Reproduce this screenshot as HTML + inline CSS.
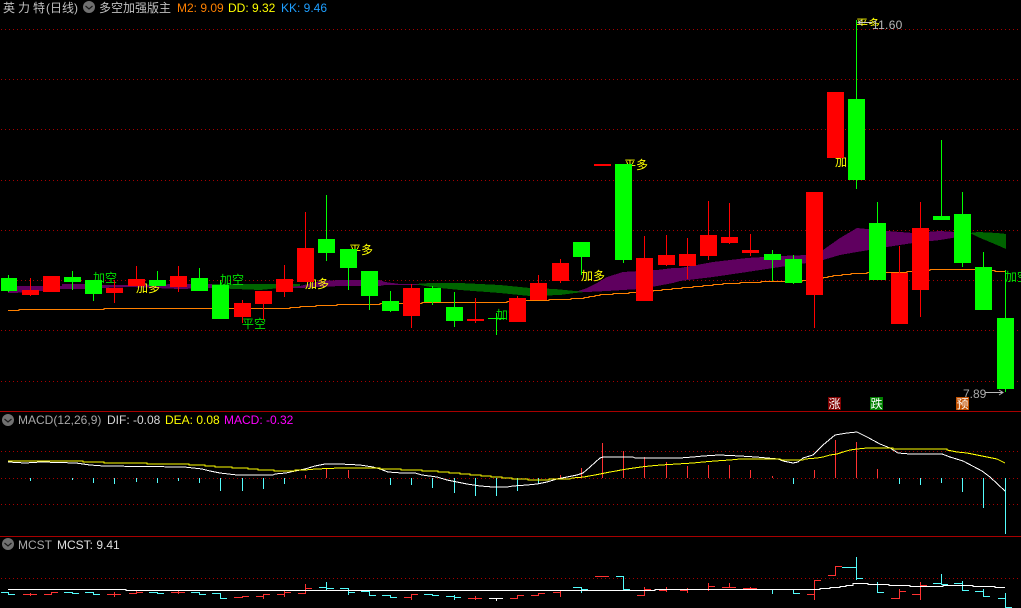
<!DOCTYPE html>
<html lang="zh"><head><meta charset="utf-8"><title>英力特</title>
<style>
html,body{margin:0;padding:0;background:#000;width:1021px;height:608px;overflow:hidden}
svg{display:block}
text{font-family:"Liberation Sans","WenQuanYi Zen Hei","Noto Sans CJK SC",sans-serif;font-size:12px}
.cn{font-family:"WenQuanYi Zen Hei","Noto Sans CJK SC",sans-serif}
.c{shape-rendering:crispEdges}
</style></head><body>
<svg width="1021" height="608" viewBox="0 0 1021 608" xmlns="http://www.w3.org/2000/svg">
<defs><clipPath id="top"><rect x="850" y="16" width="40" height="10"/></clipPath></defs>
<rect width="1021" height="608" fill="#000"/>
<g class="c" stroke="#a80000" stroke-width="1" stroke-dasharray="1 3" stroke-dashoffset="3" fill="none">
<path d="M0 29.5H1021"/><path d="M0 79.5H1021"/><path d="M0 129.5H1021"/><path d="M0 180.5H1021"/><path d="M0 230.5H1021"/><path d="M0 280.5H1021"/><path d="M0 330.5H1021"/><path d="M0 381.5H1021"/><path d="M0 451.5H1021"/><path d="M0 478.5H1021"/><path d="M0 504.5H1021"/><path d="M0 578.5H1021"/>
</g>
<path class="c" d="M0 411.5H1021M0 536.5H1021" stroke="#a80000" stroke-width="1" fill="none"/>

<!-- ribbons -->
<path class="c" fill="#5f005f" d="M8 290L16 286L62 286L62 284L85 284L102 285L130 285L180 284L212 284L300 286L320 281L340 280L380 280L385 282L400 284L420 284L420 285L400 285L385 285L380 286L340 286L320 287L300 288L212 288L180 289L130 287L102 288L85 289L62 289L40 291L30 292L14 293L8 293Z"/>
<path class="c" fill="#5f005f" d="M575 292L587 288L597 283L607 277L623 272L640 271L657 270L673 268L680 268L713 262L747 258L780 256L807 255L823 250L840 238L857 228L887 231L913 233L940 231L970 233L970 235L940 240L913 243L887 247L857 252L840 255L823 260L807 263L780 267L747 272L713 277L680 281L673 283L657 286L640 289L623 290L607 291L587 292Z"/>
<path class="c" fill="#006400" d="M212 284L300 284L300 286L260 290L212 288Z"/>
<path class="c" fill="#006400" d="M415 284L430 283L460 283L480 284L500 285L530 288L555 289L575 291L585 292L575 293L560 295L530 296L500 293L460 290L430 287Z"/>
<path class="c" fill="#006400" d="M970 233L978 232L997 233L1006 234L1006 249L997 245L985 240L978 237Z"/>

<!-- orange line -->
<path class="c" fill="none" stroke="#ff8000" stroke-width="1" d="M8 310.5H19V309.5H104V308.5H290V307.5H300V306.5H316V305.5H337V304.5H380V303.5H422V302.5H507V301.5H518V300.5H549V299.5H571V298.5H584V297.5H589V296.5H595V295.5H600V294.5H613V293.5H629V292.5H640V291.5H653V290.5H662V289.5H672V288.5H682V287.5H693V286.5H703V285.5H713V284.5H723V283.5H740V282.5H761V281.5H802V280.5H815V278.5H823V277.5H828V276.5H833V275.5H842V274.5H851V273.5H867V272.5H907V271.5H918V270.5H930V269.5H985V270.5H995V271.5H1005"/>

<!-- labels -->
<g class="cn">
<text x="93" y="282" fill="#00e000">加空</text>
<text x="136" y="292" fill="#ffff00">加多</text>
<text x="220" y="284" fill="#00e000">加空</text>
<text x="242" y="328" fill="#00e000">平空</text>
<text x="305" y="288" fill="#ffff00">加多</text>
<text x="349" y="254" fill="#ffff00">平多</text>
<text x="496" y="319" fill="#00e000">加空</text>
<text x="581" y="280" fill="#ffff00">加多</text>
<text x="624" y="169" fill="#ffff00">平多</text>
<text x="835" y="166" fill="#ffff00">加多</text>
<text x="856" y="28" fill="#ffff00" clip-path="url(#top)">平多</text>
<text x="1005" y="281" fill="#00e000">加空</text>
</g>

<!-- candles -->
<path class="c" fill="#00ff00" d="M8 275h1v17h-1zM72 271h1v19h-1zM93 280h1v21h-1zM157 271h1v15h-1zM199 268h1v23h-1zM220 280h1v39h-1zM326 195h1v66h-1zM348 268h1v22h-1zM369 296h1v14h-1zM390 291h1v21h-1zM432 286h1v19h-1zM454 292h1v35h-1zM496 313h1v22h-1zM581 257h1v18h-1zM623 260h1v3h-1zM772 250h1v31h-1zM793 255h1v29h-1zM856 20h1v169h-1zM877 202h1v21h-1zM941 140h1v76h-1zM962 192h1v75h-1zM983 252h1v15h-1zM1005 270h1v122h-1z
M1 278h16V291H1zM64 277h17V282H64zM85 280h17V294H85zM149 280h17V286H149zM191 278h17V291H191zM212 285h17V319H212zM318 239h17V253H318zM340 249h17V268H340zM361 271h17V296H361zM382 301h17V311H382zM424 288h17V302H424zM446 307h17V321H446zM488 318h17V319H488zM573 242h17V257H573zM615 164h17V260H615zM764 254h17V260H764zM785 259h17V283H785zM848 99h17V180H848zM869 223h17V280H869zM933 216h17V220H933zM954 214h17V263H954zM975 267h17V310H975zM997 318h17V389H997z"/>
<path class="c" fill="#ff0000" d="M30 278h1v18h-1zM114 280h1v23h-1zM136 266h1v20h-1zM178 266h1v26h-1zM242 300h1v23h-1zM263 304h1v16h-1zM284 265h1v32h-1zM305 212h1v36h-1zM411 284h1v44h-1zM475 298h1v25h-1zM517 296h1v2h-1zM538 275h1v8h-1zM560 259h1v24h-1zM644 236h1v22h-1zM666 235h1v31h-1zM687 238h1v41h-1zM708 201h1v59h-1zM729 203h1v41h-1zM750 234h1v22h-1zM814 295h1v33h-1zM899 246h1v27h-1zM920 202h1v115h-1z
M22 290h17V295H22zM43 276h17V292H43zM106 288h17V293H106zM128 279h17V286H128zM170 276h17V287H170zM234 303h17V317H234zM255 291h17V304H255zM276 279h17V292H276zM297 248h17V282H297zM403 288h17V316H403zM467 319h17V321H467zM509 298h17V322H509zM530 283h17V300H530zM552 263h17V281H552zM594 164h17V166H594zM636 258h17V301H636zM658 255h17V265H658zM679 254h17V266H679zM700 235h17V256H700zM721 237h17V243H721zM742 250h17V253H742zM806 192h17V295H806zM827 92h17V158H827zM891 273h17V324H891zM912 228h17V290H912z"/>

<!-- price markers -->
<path d="M872 22.5H858M862 20L858 22.5L862 25" stroke="#c8c8c8" stroke-width="1" fill="none"/>
<text x="872" y="29" fill="#b8b8b8" letter-spacing=".3">11.60</text>
<text x="963" y="398" fill="#a8a8a8">7.89</text>
<path d="M985 392.5H1003M999 390L1003 392.5L999 395" stroke="#b8b8b8" stroke-width="1" fill="none"/>

<!-- signal badges -->
<rect class="c" x="828" y="397" width="13" height="13" fill="#800000"/>
<text class="cn" x="828.5" y="408" fill="#fff">涨</text>
<rect class="c" x="870" y="397" width="13" height="13" fill="#008000"/>
<text class="cn" x="870.5" y="408" fill="#fff">跌</text>
<rect class="c" x="956" y="397" width="13" height="13" fill="#c05000"/>
<text class="cn" x="956.5" y="408" fill="#fff">预</text>

<!-- MACD histogram -->
<path class="c" fill="none" stroke="#54fcfc" d="M30.5 478V481M72.5 478V480M93.5 478V483M114.5 478V484M136.5 478V482M157.5 478V483M178.5 478V481M199.5 478V483M220.5 478V491M242.5 478V491M263.5 478V489M284.5 478V484M390.5 478V485M411.5 478V485M432.5 478V488M454.5 478V493M475.5 478V496M496.5 478V496M517.5 478V491M538.5 478V484M793.5 478V484M899.5 478V484M920.5 478V485M941.5 478V483M962.5 478V492M983.5 478V508M1005.5 478V534"/>
<path class="c" fill="none" stroke="#ff3232" d="M305.5 475V478M326.5 469V478M348.5 470V478M560.5 475V478M581.5 468V478M602.5 443V478M623.5 451V478M644.5 457V478M666.5 462V478M687.5 466V478M708.5 465V478M729.5 465V478M750.5 470V478M772.5 476V478M814.5 470V478M835.5 440V478M856.5 442V478M877.5 469V478"/>

<!-- DIF -->
<polyline class="c" fill="none" stroke="#ffffff" points="8,462 25,463 41,462 76,463 83,464 90,465 104,466 184,467 193,468 202,469 210,471 220,473 237,475 273,475 275,474 286,473 295,471 305,469 315,466 325,464 340,464 360,465 373,467 380,469 388,472 402,473 415,473 422,475 437,477 447,480 457,482 467,484 480,486 493,487 507,487 513,486 527,485 537,484 547,482 557,479 567,477 577,475 583,473 590,467 600,458 603,457 633,457 635,458 680,458 693,457 703,456 719,455 740,456 756,457 767,458 778,459 783,461 788,462 793,463 798,462 803,458 813,455 823,445 835,435 847,433 857,432 867,437 880,444 890,448 898,453 910,454 942,454 950,457 963,461 982,471 990,477 1005,491"/>
<!-- DEA -->
<polyline class="c" fill="none" stroke="#ffff00" points="8,461 83,461 83,462 104,462 104,463 147,463 147,464 189,464 189,465 205,465 205,466 215,466 215,467 232,467 232,468 248,468 248,469 258,469 258,470 274,470 274,471 295,471 295,470 305,470 316,469 340,468 380,468 380,469 401,469 401,470 422,470 422,471 438,471 438,472 449,472 449,473 460,473 460,474 470,474 470,475 481,475 481,476 491,476 491,477 502,477 502,478 512,478 512,479 528,479 528,480 549,480 549,479 570,479 572,478 584,477 589,476 595,475 600,474 605,473 610,472 616,471 621,470 627,469 634,468 641,467 650,466 661,465 677,464 693,463 703,462 715,461 730,460 740,459 780,459 782,460 803,460 805,459 817,458 823,457 830,455 837,454 843,452 850,450 857,449 867,448 893,448 893,449 947,449 947,450 957,452 967,453 977,455 987,457 997,459 1005,463"/>

<!-- MCST -->
<path class="c" fill="none" stroke="#54fcfc" d="M1 592.5H8.5V594.5H15M64 592.5H72.5V593.5H79M85 592.5H93.5V594.5H100M149 592.5H157.5V593.5H164M191 592.5H199.5V594.5H206M212 593.5H220.5V598.5H227M340 588.5H348.5V592.5H355M348.5 592V595M361 591.5H369.5V595.5H376M382 595.5H390.5V597.5H397M424 594.5H432.5V595.5H439M446 596.5H454.5V597.5H461M454.5 595V600M573 587.5H581.5V589.5H588M581.5 589V593M616 576.5H623.5V589.5H630M326.5 582V590M319 587.5H326.5V588.5H334M772.5 590V594M793.5 590V593.5H800M849 567.5H856.5V578.5H863M856.5 557V580M933 583.5H941.5V584.5H948M941.5 574V585M954 583.5H962.5V590.5H969M962.5 581V591M975 591.5H983.5V596.5H990M983.5 589V596M998 598.5H1005.5V607.5H1012M1005.5 593V607M877.5 582V592.5H884"/>
<path class="c" fill="none" stroke="#ff3232" d="M23 594.5H37M30.5 593V596M44 594.5H51.5V592.5H58M107 594.5H121M114.5 592V597M129 593.5H136.5V592.5H143M136.5 591V594M171 592.5H185M178.5 591V594M234 597.5H242.5V596.5H249M256 596.5H263.5V594.5H270M263.5 594V599M277 594.5H284.5V592.5H291M284.5 591V597M298 593.5H305.5V588.5H312M305.5 584V594M404 597.5H411.5V594.5H418M411.5 594V600M468 598.5H482M475.5 596V600M510 598.5H517.5V595.5H524M531 595.5H538.5V593.5H545M553 592.5H560.5M560.5 591V597M595 576.5H609M637 595.5H644.5V589.5H651M644.5 587V596M659 590.5H666.5M666.5 587V592M680 590.5H687.5M687.5 588V593M708.5 583V591M708.5 586.5H715M722 587.5H736M729.5 583V588M743 588.5H757M750.5 587V589M807 594.5H814.5V580.5H821M814.5 580V600M828 575.5H835.5V566.5H842M891 598.5H899.5V591.5H906M899.5 589V599M912 594.5H920.5V585.5H927M920.5 582V600"/>
<path class="c" fill="none" stroke="#ffffff" d="M489 598.5H503M496.5 598V601"/>
<path class="c" fill="none" stroke="#ffffff" d="M8 589.5H126V590.5H655V589.5H820V588.5H830V587.5H840V586.5H846V585.5H853V583.5H868V584.5H889V585.5H910V586.5H943V585.5H973V586.5H995V587.5H1005"/>
<path class="c" fill="none" stroke="#54fcfc" d="M842 567.5H849"/>

<!-- header -->
<text class="cn" x="3" y="12" fill="#c0c0c0">英</text>
<text class="cn" x="18" y="12" fill="#c0c0c0">力</text>
<text class="cn" x="33" y="12" fill="#c0c0c0">特</text>
<text x="46" y="12" fill="#c0c0c0">(</text>
<text class="cn" x="50" y="12" fill="#c0c0c0">日线</text>
<text x="74" y="12" fill="#c0c0c0">)</text>
<circle cx="89" cy="7" r="6" fill="#707070"/>
<path d="M85.5 6L89 9L92.5 6" stroke="#1a1a1a" stroke-width="1.2" fill="none"/>
<text class="cn" x="99" y="12" fill="#c0c0c0">多空加强版主</text>
<text x="177" y="12" fill="#ff8000">M2: 9.09</text>
<text x="228" y="12" fill="#ffff00">DD: 9.32</text>
<text x="281" y="12" fill="#1e9fff">KK: 9.46</text>

<!-- MACD header -->
<circle cx="8" cy="420" r="6" fill="#707070"/>
<path d="M4.5 419L8 422L11.5 419" stroke="#1a1a1a" stroke-width="1.2" fill="none"/>
<text x="18" y="424" fill="#a8a8a8">MACD(12,26,9)</text>
<text x="107" y="424" fill="#d8d8d8">DIF: -0.08</text>
<text x="165" y="424" fill="#ffff00">DEA: 0.08</text>
<text x="224" y="424" fill="#ff00ff">MACD: -0.32</text>

<!-- MCST header -->
<circle cx="8" cy="544" r="6" fill="#707070"/>
<path d="M4.5 543L8 546L11.5 543" stroke="#1a1a1a" stroke-width="1.2" fill="none"/>
<text x="18" y="549" fill="#a8a8a8">MCST</text>
<text x="57" y="549" fill="#e0e0e0">MCST: 9.41</text>
</svg>
</body></html>
